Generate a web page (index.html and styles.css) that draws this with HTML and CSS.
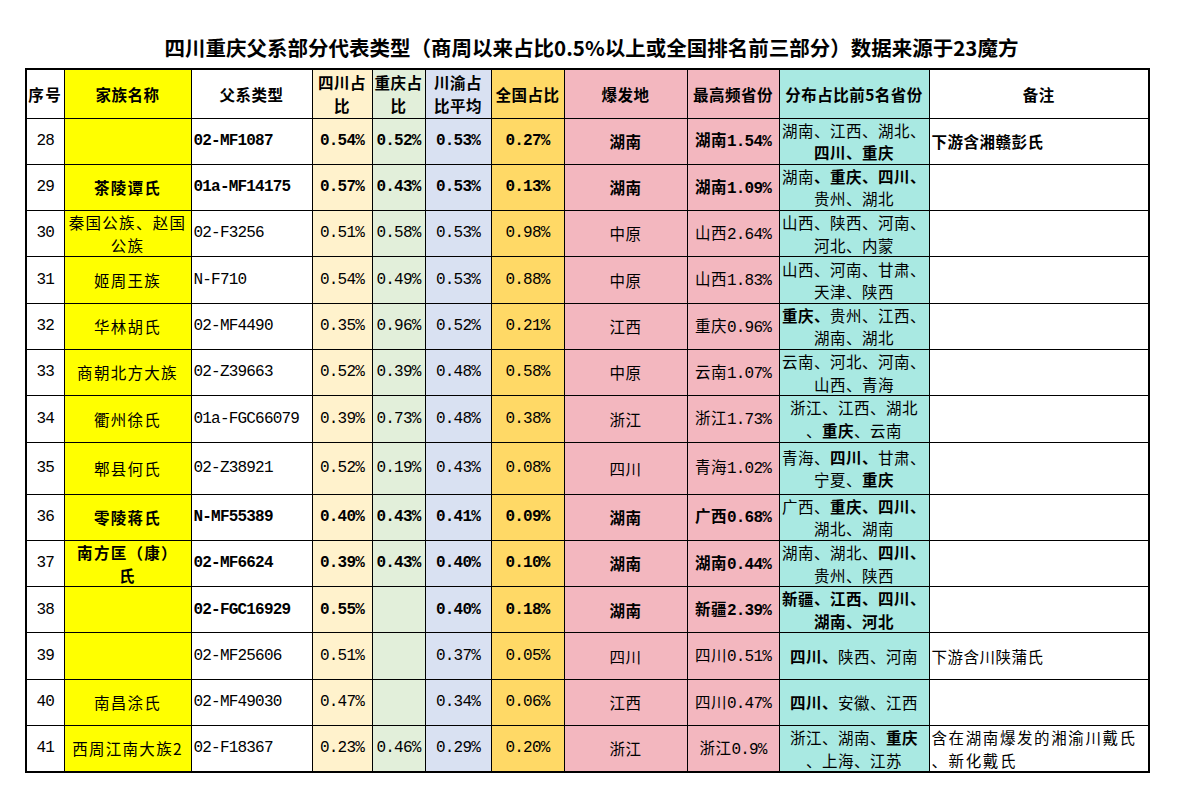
FILE: index.html
```html
<!DOCTYPE html>
<html lang="zh-CN">
<head>
<meta charset="utf-8">
<title>四川重庆父系部分代表类型</title>
<link rel="stylesheet" href="styles.css">
</head>
<body>
<div class="page">
  <h1 class="title">四川重庆父系部分代表类型（商周以来占比0.5%以上或全国排名前三部分）数据来源于23魔方</h1>
  <table class="sheet">
    <colgroup>
      <col class="col-idx"><col class="col-name"><col class="col-code"><col class="col-sc"><col class="col-cq"><col class="col-avg"><col class="col-cn"><col class="col-src"><col class="col-top"><col class="col-dist"><col class="col-note">
    </colgroup>
    <thead>
      <tr>
        <th class="h-idx">序号</th>
        <th>家族名称</th>
        <th>父系类型</th>
        <th>四川占<br>比</th>
        <th>重庆占<br>比</th>
        <th>川渝占<br>比平均</th>
        <th>全国占比</th>
        <th>爆发地</th>
        <th>最高频省份</th>
        <th>分布占比前5名省份</th>
        <th class="h-note">备注</th>
      </tr>
    </thead>
    <tbody>
      <tr class="strong">
        <td class="n idx">28</td><td class="name"></td><td class="n code">02-MF1087</td>
        <td class="n">0.54%</td><td class="n">0.52%</td><td class="n">0.53%</td><td class="n">0.27%</td>
        <td>湖南</td><td>湖南<span class="n">1.54%</span></td>
        <td class="dist">湖南、江西、湖北、<br><b>四川、重庆</b></td>
        <td class="note">下游含湘赣彭氏</td>
      </tr>
      <tr class="strong">
        <td class="n idx">29</td><td class="name">茶陵谭氏</td><td class="n code">01a-MF14175</td>
        <td class="n">0.57%</td><td class="n">0.43%</td><td class="n">0.53%</td><td class="n">0.13%</td>
        <td>湖南</td><td>湖南<span class="n">1.09%</span></td>
        <td class="dist">湖南<b>、重庆、四川、</b><br>贵州、湖北</td>
        <td class="note"></td>
      </tr>
      <tr>
        <td class="n idx">30</td><td class="name">秦国公族、赵国<br>公族</td><td class="n code">02-F3256</td>
        <td class="n">0.51%</td><td class="n">0.58%</td><td class="n">0.53%</td><td class="n">0.98%</td>
        <td>中原</td><td>山西<span class="n">2.64%</span></td>
        <td class="dist">山西、陕西、河南、<br>河北、内蒙</td>
        <td class="note"></td>
      </tr>
      <tr>
        <td class="n idx">31</td><td class="name">姬周王族</td><td class="n code">N-F710</td>
        <td class="n">0.54%</td><td class="n">0.49%</td><td class="n">0.53%</td><td class="n">0.88%</td>
        <td>中原</td><td>山西<span class="n">1.83%</span></td>
        <td class="dist">山西、河南、甘肃、<br>天津、陕西</td>
        <td class="note"></td>
      </tr>
      <tr>
        <td class="n idx">32</td><td class="name">华林胡氏</td><td class="n code">02-MF4490</td>
        <td class="n">0.35%</td><td class="n">0.96%</td><td class="n">0.52%</td><td class="n">0.21%</td>
        <td>江西</td><td>重庆<span class="n">0.96%</span></td>
        <td class="dist"><b>重庆、</b>贵州、江西、<br>湖南、湖北</td>
        <td class="note"></td>
      </tr>
      <tr>
        <td class="n idx">33</td><td class="name">商朝北方大族</td><td class="n code">02-Z39663</td>
        <td class="n">0.52%</td><td class="n">0.39%</td><td class="n">0.48%</td><td class="n">0.58%</td>
        <td>中原</td><td>云南<span class="n">1.07%</span></td>
        <td class="dist">云南、河北、河南、<br>山西、青海</td>
        <td class="note"></td>
      </tr>
      <tr>
        <td class="n idx">34</td><td class="name">衢州徐氏</td><td class="n code">01a-FGC66079</td>
        <td class="n">0.39%</td><td class="n">0.73%</td><td class="n">0.48%</td><td class="n">0.38%</td>
        <td>浙江</td><td>浙江<span class="n">1.73%</span></td>
        <td class="dist">浙江、江西、湖北<br>、<b>重庆</b>、云南</td>
        <td class="note"></td>
      </tr>
      <tr class="tall">
        <td class="n idx">35</td><td class="name">郫县何氏</td><td class="n code">02-Z38921</td>
        <td class="n">0.52%</td><td class="n">0.19%</td><td class="n">0.43%</td><td class="n">0.08%</td>
        <td>四川</td><td>青海<span class="n">1.02%</span></td>
        <td class="dist">青海、<b>四川、</b>甘肃、<br>宁夏、<b>重庆</b></td>
        <td class="note"></td>
      </tr>
      <tr class="strong">
        <td class="n idx">36</td><td class="name">零陵蒋氏</td><td class="n code">N-MF55389</td>
        <td class="n">0.40%</td><td class="n">0.43%</td><td class="n">0.41%</td><td class="n">0.09%</td>
        <td>湖南</td><td>广西<span class="n">0.68%</span></td>
        <td class="dist">广西、<b>重庆、四川、</b><br>湖北、湖南</td>
        <td class="note"></td>
      </tr>
      <tr class="strong">
        <td class="n idx">37</td><td class="name">南方匡（康）<br>氏</td><td class="n code">02-MF6624</td>
        <td class="n">0.39%</td><td class="n">0.43%</td><td class="n">0.40%</td><td class="n">0.10%</td>
        <td>湖南</td><td>湖南<span class="n">0.44%</span></td>
        <td class="dist">湖南、湖北、<b>四川、</b><br>贵州、陕西</td>
        <td class="note"></td>
      </tr>
      <tr class="strong">
        <td class="n idx">38</td><td class="name"></td><td class="n code">02-FGC16929</td>
        <td class="n">0.55%</td><td class="n"></td><td class="n">0.40%</td><td class="n">0.18%</td>
        <td>湖南</td><td>新疆<span class="n">2.39%</span></td>
        <td class="dist"><b>新疆、江西、四川、<br>湖南、河北</b></td>
        <td class="note"></td>
      </tr>
      <tr>
        <td class="n idx">39</td><td class="name"></td><td class="n code">02-MF25606</td>
        <td class="n">0.51%</td><td class="n"></td><td class="n">0.37%</td><td class="n">0.05%</td>
        <td>四川</td><td>四川<span class="n">0.51%</span></td>
        <td class="dist"><b>四川、</b>陕西、河南</td>
        <td class="note">下游含川陕蒲氏</td>
      </tr>
      <tr>
        <td class="n idx">40</td><td class="name">南昌涂氏</td><td class="n code">02-MF49030</td>
        <td class="n">0.47%</td><td class="n"></td><td class="n">0.34%</td><td class="n">0.06%</td>
        <td>江西</td><td>四川<span class="n">0.47%</span></td>
        <td class="dist"><b>四川、</b>安徽、江西</td>
        <td class="note"></td>
      </tr>
      <tr>
        <td class="n idx">41</td><td class="name">西周江南大族2</td><td class="n code">02-F18367</td>
        <td class="n">0.23%</td><td class="n">0.46%</td><td class="n">0.29%</td><td class="n">0.20%</td>
        <td>浙江</td><td>浙江<span class="n">0.9%</span></td>
        <td class="dist">浙江、湖南、<b>重庆</b><br>、上海、江苏</td>
        <td class="note wide">含在湖南爆发的湘渝川戴氏<br>、新化戴氏</td>
      </tr>
    </tbody>
  </table>
</div>
</body>
</html>
```

FILE: styles.css
```css
html, body {
  margin: 0;
  background: #ffffff;
  color: #000000;
  font-family: "Noto Sans CJK SC", "Noto Sans", sans-serif;
}

.page {
  padding: 35px 0 0 25px;
}

.title {
  box-sizing: border-box;
  width: 1123px;
  margin: 0 0 9px;
  padding-left: 10px;
  text-align: center;
  font-size: 20.5px;
  line-height: 24px;
  font-weight: 700;
}

.sheet {
  border-collapse: collapse;
  table-layout: fixed;
  width: 1123px;
  border: 2px solid #000;
}

.sheet th,
.sheet td {
  border: 1px solid #000;
  padding: 0 1px;
  text-align: center;
  vertical-align: middle;
  font-size: 15.5px;
  letter-spacing: 0.5px;
  line-height: 22.5px;
  white-space: nowrap;
  overflow: hidden;
}

.sheet th {
  font-weight: 700;
}

.sheet th.h-idx {
  padding: 0;
  letter-spacing: 1.5px;
}

.sheet thead tr { height: 49px; }
.sheet tbody tr { height: 46.3px; }
.sheet tbody tr.tall { height: 52px; }

.col-idx  { width: 38px; }
.col-name { width: 127px; background: #ffff00; }
.col-code { width: 121px; }
.col-sc   { width: 60px; background: #fff2cc; }
.col-cq   { width: 53px; background: #e2efda; }
.col-avg  { width: 66px; background: #d9e1f2; }
.col-cn   { width: 73px; background: #ffd966; }
.col-src  { width: 123px; background: #f3b7bf; }
.col-top  { width: 92px; background: #f3b7bf; }
.col-dist { width: 150px; background: #a9e9e2; }
.col-note { width: 220px; }

.n,
.sheet td.n {
  font-family: "Liberation Mono", "Noto Sans CJK SC", monospace;
  font-size: 16px;
  letter-spacing: -0.8px;
}

.sheet tr.strong td { font-weight: 700; }
.sheet tr.strong td.idx,
.sheet tr.strong td.dist { font-weight: 400; }

.sheet td.dist b { font-weight: 700; }

.sheet td.name { letter-spacing: 1.3px; }
.sheet td.code { text-align: left; padding-left: 2px; }
.sheet td.note { text-align: left; padding-left: 2px; }
.sheet td.note.wide { letter-spacing: 1.6px; }
.sheet tr:not(.strong) td.note { font-weight: 400; }
```
